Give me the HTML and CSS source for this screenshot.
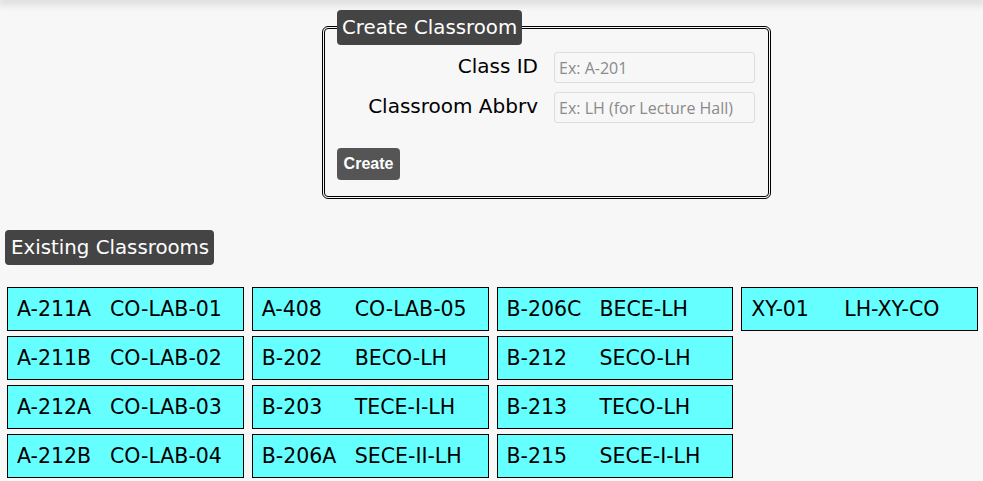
FILE: index.html
```html
<!DOCTYPE html>
<html>
<head>
<meta charset="utf-8">
<link rel="stylesheet" href="styles.css">
</head>
<body>
<div class="topbar"></div>
<main class="page">
  <form class="create">
    <fieldset class="create-box">
      <legend class="create-legend">Create Classroom</legend>
      <div class="form-grid">
        <label class="form-label" for="cid">Class ID</label>
        <input class="form-input" id="cid" type="text" placeholder="Ex: A-201">
        <label class="form-label" for="cab">Classroom Abbrv</label>
        <input class="form-input" id="cab" type="text" placeholder="Ex: LH (for Lecture Hall)">
      </div>
      <button class="create-btn" type="button">Create</button>
    </fieldset>
  </form>

  <h2 class="section-title">Existing Classrooms</h2>

  <div class="rooms">
    <div class="room"><span class="room-id">A-211A</span><span>CO-LAB-01</span></div>
    <div class="room"><span class="room-id">A-211B</span><span>CO-LAB-02</span></div>
    <div class="room"><span class="room-id">A-212A</span><span>CO-LAB-03</span></div>
    <div class="room"><span class="room-id">A-212B</span><span>CO-LAB-04</span></div>
    <div class="room"><span class="room-id">A-408</span><span>CO-LAB-05</span></div>
    <div class="room"><span class="room-id">B-202</span><span>BECO-LH</span></div>
    <div class="room"><span class="room-id">B-203</span><span>TECE-I-LH</span></div>
    <div class="room"><span class="room-id">B-206A</span><span>SECE-II-LH</span></div>
    <div class="room"><span class="room-id">B-206C</span><span>BECE-LH</span></div>
    <div class="room"><span class="room-id">B-212</span><span>SECO-LH</span></div>
    <div class="room"><span class="room-id">B-213</span><span>TECO-LH</span></div>
    <div class="room"><span class="room-id">B-215</span><span>SECE-I-LH</span></div>
    <div class="room"><span class="room-id">XY-01</span><span>LH-XY-CO</span></div>
  </div>
</main>
</body>
</html>
```

FILE: styles.css
```css
html, body {
  margin: 0;
  padding: 0;
  background: #f7f7f7;
  font-family: "DejaVu Sans", Verdana, sans-serif;
  color: #000;
}

.topbar {
  height: 0;
  box-shadow: 0 0 10px 3px rgba(0, 0, 0, 0.18);
}

.page {
  padding-top: 10px;
}

.create {
  margin: 0 0 0 322px;
  width: 449px;
}

.create-box {
  margin: 0;
  border: 3px double #000;
  border-radius: 6px;
  padding: 7px 13px 16px 12px;
}

.create-legend {
  background: #444;
  color: #fff;
  font-size: 19.8px;
  line-height: 35px;
  height: 35px;
  padding: 0 5px;
  margin-left: 0;
  border-radius: 4px;
}

.form-grid {
  display: grid;
  grid-template-columns: 1fr 1fr;
  column-gap: 16px;
  row-gap: 9px;
  align-items: center;
}

.form-label {
  text-align: right;
  font-size: 20px;
  line-height: 24px;
  padding-bottom: 4px;
}

.form-input {
  box-sizing: border-box;
  height: 31px;
  width: 100%;
  border: 1px solid #ddd;
  border-radius: 3px;
  background: #f7f7f7;
  padding: 0 4px;
  font-family: "Open Sans", sans-serif;
  font-size: 16px;
  color: #333;
}

.form-input::placeholder {
  color: #8a8a8a;
}

.create-btn {
  margin-top: 25px;
  display: block;
  height: 32px;
  width: 63px;
  padding: 0;
  border: none;
  border-radius: 4px;
  background: #555;
  color: #fff;
  font-family: "Liberation Sans", Arial, sans-serif;
  font-weight: bold;
  font-size: 16px;
}

.section-title {
  display: inline-block;
  margin: 31px 0 0 5px;
  background: #444;
  color: #fff;
  font-weight: normal;
  font-size: 19.8px;
  line-height: 35px;
  height: 35px;
  padding: 0 5px 0 6px;
  border-radius: 4px;
}

.rooms {
  display: grid;
  grid-template-columns: repeat(4, 1fr);
  grid-template-rows: repeat(4, 44px);
  grid-auto-flow: column;
  column-gap: 8px;
  row-gap: 5px;
  margin: 22px 5px 0 7px;
}

.room {
  box-sizing: border-box;
  display: flex;
  align-items: center;
  background: #66ffff;
  border: 1px solid #000;
  padding-left: 9px;
  font-size: 20.5px;
}

.room-id {
  width: 93px;
  flex: none;
}
```
